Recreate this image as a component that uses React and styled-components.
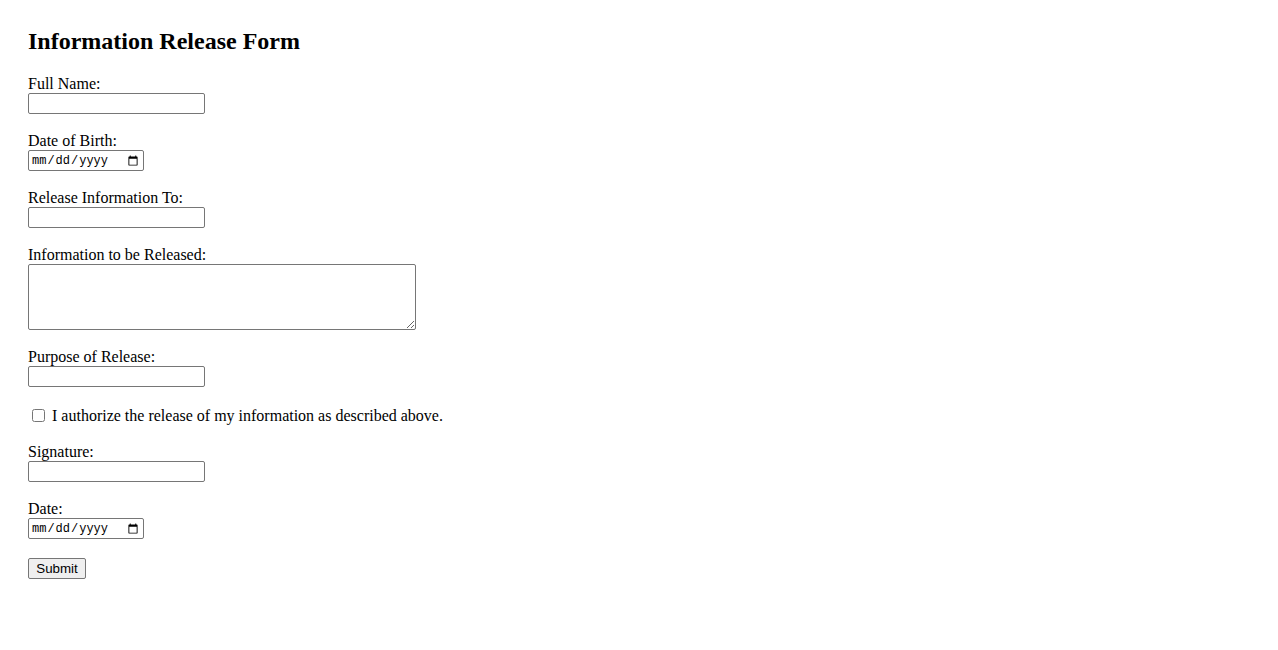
import React from "react"
import styled, { createGlobalStyle } from "styled-components"

const GlobalStyle = createGlobalStyle`
  body {
    margin: 0;
    background: #fff;
    color: #000;
    font-family: "Liberation Serif", "Times New Roman", serif;
    font-size: 16px;
  }
`

const Page = styled.div`
  padding: 27px 28px;
`

const Title = styled.h2`
  margin: 0 0 20px;
  font-size: 24px;
  line-height: 28px;
  font-weight: bold;
`

const Form = styled.form`
  display: flex;
  flex-direction: column;
  align-items: flex-start;
  gap: 18px;
`

const Field = styled.div`
  display: flex;
  flex-direction: column;
  align-items: flex-start;
`

const Label = styled.label`
  display: block;
  line-height: 18px;
  height: 18px;
`

const TextInput = styled.input`
  box-sizing: border-box;
  width: 177px;
  height: 21px;
  margin: 0;
  padding: 1px 2px;
  border: 1px solid #767676;
  border-radius: 2px;
  font-family: "Liberation Sans", Arial, sans-serif;
  font-size: 13.33px;
  background: #fff;
`

const DateInput = styled.input`
  box-sizing: border-box;
  width: 116px;
  height: 21px;
  margin: 0;
  padding: 1px 2px;
  border: 1px solid #767676;
  border-radius: 2px;
  font-family: "Liberation Mono", "DejaVu Sans Mono", monospace;
  font-size: 12px;
  background: #fff;
`

const TextArea = styled.textarea`
  box-sizing: border-box;
  width: 388px;
  height: 66px;
  margin: 0;
  padding: 2px;
  border: 1px solid #767676;
  border-radius: 2px;
  font-family: "Liberation Mono", monospace;
  font-size: 13.33px;
  display: block;
`

const CheckRow = styled.div`
  display: flex;
  align-items: flex-end;
  height: 20px;
`

const Check = styled.input`
  width: 13px;
  height: 13px;
  margin: 3px 7px 3px 4px;
`

const CheckText = styled.label`
  line-height: 18px;
`

const SubmitButton = styled.button`
  box-sizing: border-box;
  min-width: 58px;
  height: 21px;
  margin: 1px 0 0;
  padding: 1px 7px;
  border: 1px solid #767676;
  border-radius: 2px;
  background: #efefef;
  font-family: "Liberation Sans", Arial, sans-serif;
  font-size: 13.33px;
  color: #000;
`

const fields = [
  { id: "fullName", label: "Full Name:", type: "text" },
  { id: "dob", label: "Date of Birth:", type: "date" },
  { id: "recipient", label: "Release Information To:", type: "text" },
  { id: "info", label: "Information to be Released:", type: "textarea" },
  { id: "purpose", label: "Purpose of Release:", type: "text" },
]

const Control = ({ id, type }) => {
  if (type === "textarea") return <TextArea id={id} rows={4} />
  if (type === "date") return <DateInput id={id} type="date" />
  return <TextInput id={id} type="text" />
}

const App = () => {
  return (
    <>
      <GlobalStyle />
      <Page>
        <Title>Information Release Form</Title>
        <Form onSubmit={(e) => e.preventDefault()}>
          {fields.map((f) => (
            <Field key={f.id}>
              <Label htmlFor={f.id}>{f.label}</Label>
              <Control id={f.id} type={f.type} />
            </Field>
          ))}
          <CheckRow>
            <Check type="checkbox" id="authorize" />
            <CheckText htmlFor="authorize">
              I authorize the release of my information as described above.
            </CheckText>
          </CheckRow>
          <Field>
            <Label htmlFor="signature">Signature:</Label>
            <TextInput id="signature" type="text" />
          </Field>
          <Field>
            <Label htmlFor="date">Date:</Label>
            <DateInput id="date" type="date" />
          </Field>
          <SubmitButton type="submit">Submit</SubmitButton>
        </Form>
      </Page>
    </>
  )
}

export default App
